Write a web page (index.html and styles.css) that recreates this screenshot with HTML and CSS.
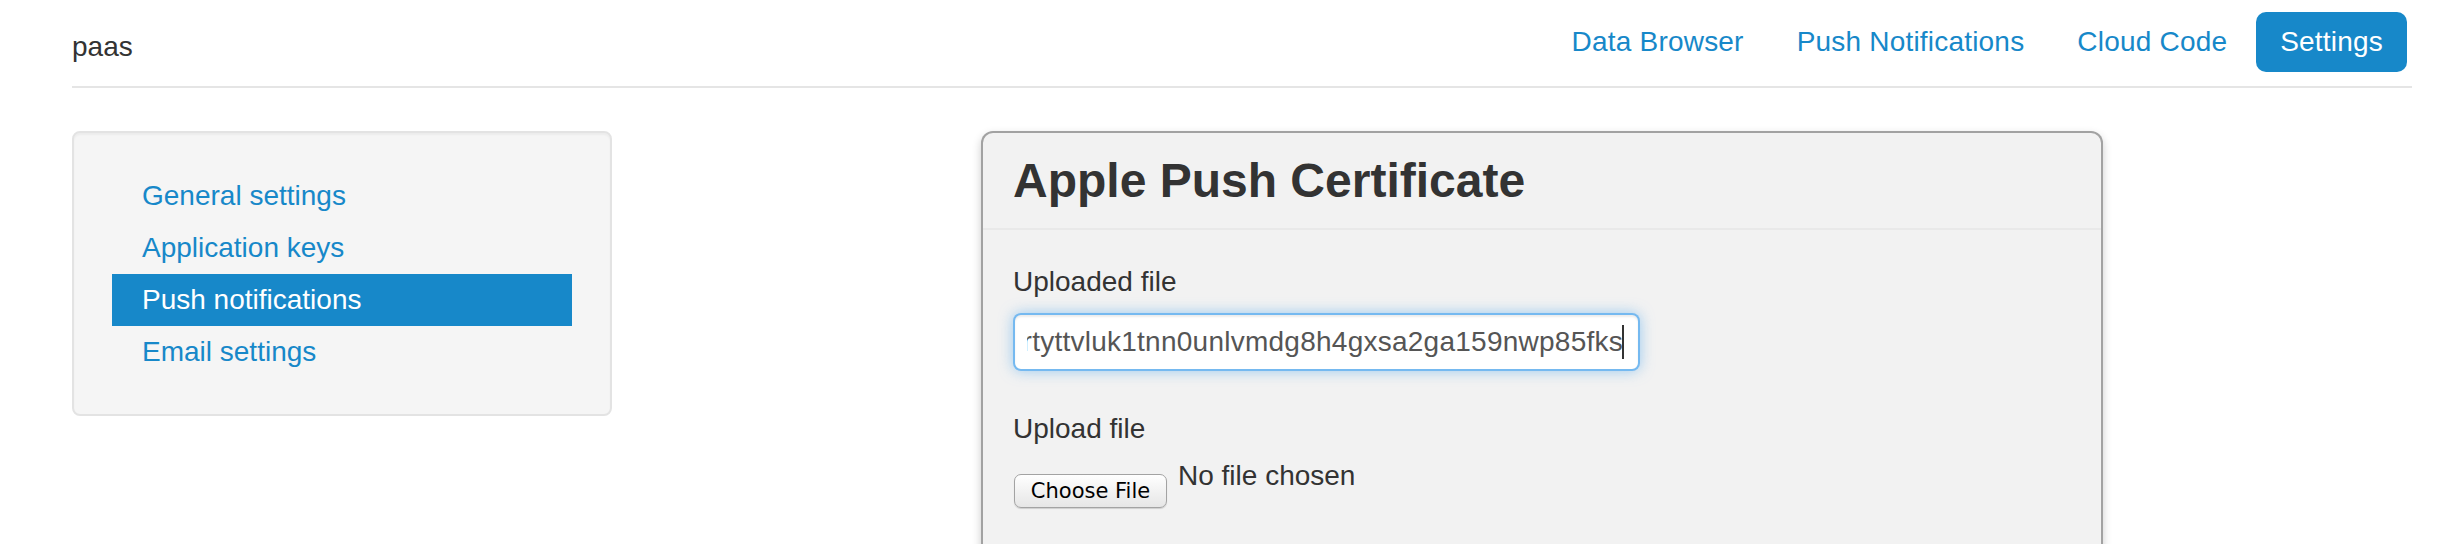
FILE: index.html
```html
<!DOCTYPE html>
<html lang="en">
<head>
<meta charset="utf-8">
<title>paas - Settings</title>
<link rel="stylesheet" href="styles.css">
</head>
<body>
<div class="page">
  <header class="topbar">
    <div class="brand">paas</div>
    <nav class="pills">
      <a class="pill" href="#">Data Browser</a>
      <a class="pill" href="#">Push Notifications</a>
      <a class="pill" href="#">Cloud Code</a>
      <a class="pill active" href="#">Settings</a>
    </nav>
  </header>
  <div class="main">
    <aside class="well">
      <ul class="nav-list">
        <li><a href="#">General settings</a></li>
        <li><a href="#">Application keys</a></li>
        <li class="active"><a href="#">Push notifications</a></li>
        <li><a href="#">Email settings</a></li>
      </ul>
    </aside>
    <section class="panel">
      <div class="panel-header">
        <h3 class="panel-title">Apple Push Certificate</h3>
      </div>
      <div class="panel-body">
        <label class="field-label">Uploaded file</label>
        <div class="text-input focused">
          <div class="input-clip">
            <span class="input-value">tfss9f3e2b7aqrtyttvluk1tnn0unlvmdg8h4gxsa2ga159nwp85fks</span><span class="caret"></span>
          </div>
        </div>
        <label class="field-label upload-label">Upload file</label>
        <div class="file-row">
          <button class="file-btn" type="button">Choose File</button>
          <span class="file-status">No file chosen</span>
        </div>
      </div>
    </section>
  </div>
</div>
</body>
</html>
```
FILE: styles.css
```css
html, body {
  margin: 0;
  padding: 0;
  background: #ffffff;
}

body {
  font-family: "Liberation Sans", Arial, Helvetica, sans-serif;
  font-size: 28px;
  line-height: 40px;
  color: #333333;
}

.page {
  width: 2340px;
  margin-left: 72px;
}

/* ---------- top bar ---------- */
.topbar {
  display: flex;
  justify-content: space-between;
  align-items: flex-start;
  height: 88px;
  box-sizing: border-box;
  border-bottom: 2px solid #e5e5e5;
}

.brand {
  margin-top: 27px;
  font-size: 28px;
  line-height: 40px;
  color: #333333;
}

.pills {
  display: flex;
  gap: 5px;
  margin-top: 12px;
  margin-right: 5px;
}

.pill {
  display: block;
  padding: 16px 24px;
  line-height: 28px;
  font-size: 28px;
  border-radius: 10px;
  color: #1788c9;
  text-decoration: none;
  letter-spacing: 0.2px;
}

.pill.active {
  background: #1788c9;
  color: #ffffff;
}

/* ---------- main ---------- */
.main {
  display: flex;
  align-items: flex-start;
  margin-top: 43px;
}

.well {
  flex: 0 0 540px;
  box-sizing: border-box;
  padding: 37px 38px 36px;
  background: #f5f5f5;
  border: 2px solid #e3e3e3;
  border-radius: 8px;
  box-shadow: inset 0 2px 2px rgba(0, 0, 0, 0.04);
}

.nav-list {
  list-style: none;
  margin: 0;
  padding: 0;
}

.nav-list a {
  display: block;
  padding: 6px 30px;
  line-height: 40px;
  color: #1788c9;
  text-decoration: none;
}

.nav-list .active a {
  background: #1788c9;
  color: #ffffff;
}

/* ---------- panel ---------- */
.panel {
  width: 1122px;
  margin-left: 369px;
  box-sizing: border-box;
  background: #f2f2f2;
  border: 2px solid rgba(0, 0, 0, 0.33);
  border-radius: 12px;
  box-shadow: 0 4px 10px rgba(0, 0, 0, 0.2);
}

.panel-header {
  padding: 21px 30px 20px;
  border-bottom: 2px solid #e9e9e9;
}

.panel-title {
  margin: 0;
  font-size: 48px;
  line-height: 54px;
  font-weight: bold;
  color: #333333;
}

.panel-body {
  padding: 32px 30px 80px;
}

.field-label {
  display: block;
  margin-bottom: 11px;
  line-height: 40px;
  color: #333333;
}

.upload-label {
  margin-top: 38px;
  margin-bottom: 7px;
}

.text-input {
  width: 627px;
  height: 58px;
  box-sizing: border-box;
  padding: 7px 14px 7px 12px;
  background: #ffffff;
  border: 2px solid rgba(82, 168, 236, 0.8);
  border-radius: 8px;
  box-shadow: inset 0 2px 2px rgba(0, 0, 0, 0.075), 0 0 14px rgba(82, 168, 236, 0.55);
  color: #555555;
  line-height: 40px;
}

.input-clip {
  display: flex;
  justify-content: flex-end;
  align-items: center;
  height: 40px;
  overflow: hidden;
}

.input-value {
  flex: 0 0 auto;
  white-space: nowrap;
  letter-spacing: 0.25px;
}

.caret {
  flex: 0 0 auto;
  width: 2px;
  height: 34px;
  margin-left: -1px;
  background: #333333;
}

.file-row {
  display: flex;
  align-items: flex-start;
}

.file-btn {
  margin: 18px 11px 0 1px;
  width: 153px;
  height: 34px;
  padding: 0;
  font-family: "DejaVu Sans", "Liberation Sans", sans-serif;
  font-size: 21px;
  line-height: 30px;
  color: #000000;
  background: linear-gradient(#ffffff, #f1f1f1 55%, #e6e6e6);
  border: 1px solid #a3a3a3;
  border-radius: 7px;
  box-shadow: 0 1px 1px rgba(0, 0, 0, 0.15);
}

.file-status {
  line-height: 40px;
  color: #333333;
}
```
